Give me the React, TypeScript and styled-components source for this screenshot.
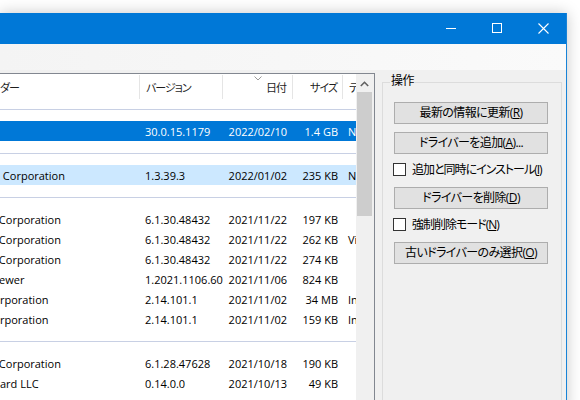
import React from "react";
import styled, { createGlobalStyle } from "styled-components";

const GlobalStyle = createGlobalStyle`
  html, body { margin: 0; padding: 0; width: 580px; height: 400px; overflow: hidden; background: #fff; }
  #root { width: 580px; height: 400px; overflow: hidden; }
  * { box-sizing: border-box; }
`;

const UI_FONT = `"Open Sans", "Noto Sans CJK JP", sans-serif`;

const Page = styled.div`
  width: 580px;
  height: 400px;
  padding-top: 13px;
  overflow: hidden;
  background: #fff;
  font-family: ${UI_FONT};
  font-feature-settings: "palt";
  color: #000;
`;

const Window = styled.div`
  width: 567px;
  height: 400px;
  background: #f0f0f0;
  border-right: 1px solid #1883d7;
  box-shadow: 0 0 14px rgba(0, 0, 0, 0.22);
  display: flex;
  flex-direction: column;
`;

const TitleBar = styled.div`
  height: 31px;
  flex-shrink: 0;
  background: #0078d7;
  display: flex;
  justify-content: flex-end;
`;

const CaptionButton = styled.div`
  width: 46px;
  height: 31px;
  display: flex;
  justify-content: center;
  align-items: flex-start;
  padding-top: 10px;
`;

const ToolStrip = styled.div`
  height: 26px;
  flex-shrink: 0;
  background: linear-gradient(to right, #f4f4f4, #fafafa);
`;

const Body = styled.div`
  flex: 1;
  display: flex;
  align-items: flex-start;
  min-height: 0;
`;

const ListView = styled.div`
  margin-top: 3px;
  width: 375px;
  height: 340px;
  background: #fff;
  border-top: 1px solid #828790;
  border-right: 1px solid #828790;
  display: flex;
  overflow: hidden;
  font-size: 11px;
`;

const ListContent = styled.div`
  width: 356px;
  flex-shrink: 0;
  display: flex;
  flex-direction: column;
  overflow: hidden;
`;

const HeaderRow = styled.div`
  height: 26px;
  flex-shrink: 0;
  display: flex;
  padding: 1px 0;
  color: #1e1e1e;
  letter-spacing: -1px;
`;

type Align = "left" | "right";

const HeaderCell = styled.div<{ $w: number; $align: Align; $pad: number }>`
  position: relative;
  flex: 0 0 ${(p) => p.$w}px;
  border-right: 1px solid #e5e5e5;
  display: flex;
  align-items: center;
  justify-content: ${(p) => (p.$align === "right" ? "flex-end" : "flex-start")};
  padding: ${(p) => (p.$align === "right" ? `0 ${p.$pad - 1}px 0 0` : `0 0 0 ${p.$pad}px`)};
  white-space: nowrap;
  overflow: hidden;
`;

const SortArrow = styled.svg`
  position: absolute;
  top: 1px;
  left: 50%;
  margin-left: -4px;
`;

const GroupHeader = styled.div<{ $first?: boolean }>`
  height: ${(p) => (p.$first ? 21 : 24)}px;
  padding-top: ${(p) => (p.$first ? 9 : 12)}px;
  flex-shrink: 0;
`;

const GroupLine = styled.div`
  height: 1px;
  background: #c8d0e4;
`;

type RowState = "selected" | "hot" | undefined;

const Row = styled.div<{ $state?: RowState }>`
  height: 20px;
  flex-shrink: 0;
  display: flex;
  align-items: center;
  background: ${(p) =>
    p.$state === "selected" ? "#0078d7" : p.$state === "hot" ? "#cce8ff" : "transparent"};
  color: ${(p) => (p.$state === "selected" ? "#fff" : "#000")};
`;

const Cell = styled.div<{ $w: number; $align: Align; $pad: number }>`
  flex: 0 0 ${(p) => p.$w}px;
  display: flex;
  justify-content: ${(p) => (p.$align === "right" ? "flex-end" : "flex-start")};
  padding: ${(p) => (p.$align === "right" ? `0 ${p.$pad}px 0 0` : `0 0 0 ${p.$pad}px`)};
  white-space: nowrap;
  overflow: hidden;
`;

const Lead = styled.span<{ $end: number }>`
  flex: 0 0 ${(p) => 80 + p.$end}px;
  margin-left: -80px;
  display: flex;
  justify-content: flex-end;
  overflow: hidden;
  white-space: nowrap;
`;

const Tail = styled.span`
  white-space: pre;
`;

const ScrollBar = styled.div`
  width: 18px;
  flex-shrink: 0;
  background: #f0f0f0;
  display: flex;
  flex-direction: column;
`;

const ScrollArrow = styled.div`
  height: 18px;
  display: flex;
  justify-content: center;
  padding: 7px 1px 0 0;
`;

const ScrollThumb = styled.div`
  height: 124px;
  margin: 0 2px 0 1px;
  background: #cdcdcd;
`;

const SidePanel = styled.div`
  margin-left: 7px;
  margin-top: 12px;
`;

const GroupBox = styled.div`
  position: relative;
  width: 180px;
  height: 330px;
  border: 1px solid #dcdcdc;
  padding: 19px 0 0 11px;
  display: flex;
  flex-direction: column;
  gap: 8px;
  font-size: 12px;
  letter-spacing: -0.6px;
`;

const GroupLabel = styled.span`
  position: absolute;
  top: -10px;
  left: 7px;
  padding: 0 1px;
  background: #f0f0f0;
  line-height: 16px;
`;

const ActionButton = styled.div`
  width: 154px;
  height: 22px;
  background: #e1e1e1;
  border: 1px solid #adadad;
  display: flex;
  align-items: center;
  justify-content: center;
  white-space: nowrap;
  line-height: 16px;
`;

const CheckRow = styled.div`
  height: 13px;
  margin: 1px 0 3px -1px;
  display: flex;
  align-items: center;
  gap: 6px;
  white-space: nowrap;
`;

const CheckBox = styled.span`
  width: 13px;
  height: 13px;
  flex-shrink: 0;
  background: #fff;
  border: 1px solid #333;
`;

const CheckLabel = styled.span`
  line-height: 16px;
  letter-spacing: -1px;
`;

const Key = styled.span`
  text-decoration: underline;
  text-underline-offset: 1px;
`;

type Col = { w: number; align: Align; pad: number };
const COLS: Col[] = [
  { w: 140, align: "left", pad: 0 },
  { w: 83, align: "left", pad: 5 },
  { w: 70, align: "right", pad: 6 },
  { w: 50, align: "right", pad: 5 },
  { w: 220, align: "left", pad: 5 },
];

type Item = {
  lead: string;
  end: number;
  tail: string;
  version: string;
  date: string;
  size: string;
  device: string;
  state?: RowState;
};

const GROUPS: Item[][] = [
  [
    {
      lead: "NVIDIA",
      end: -3,
      tail: "",
      version: "30.0.15.1179",
      date: "2022/02/10",
      size: "1.4 GB",
      device: "NVIDIA GeForce RTX 3060",
      state: "selected",
    },
  ],
  [
    {
      lead: "NVIDIA",
      end: 0,
      tail: " Corporation",
      version: "1.3.39.3",
      date: "2022/01/02",
      size: "235 KB",
      device: "NVIDIA USB Type-C Port Policy Controller",
      state: "hot",
    },
  ],
  [
    { lead: "Oracle", end: -4, tail: " Corporation", version: "6.1.30.48432", date: "2021/11/22", size: "197 KB", device: "" },
    {
      lead: "Oracle",
      end: -4,
      tail: " Corporation",
      version: "6.1.30.48432",
      date: "2021/11/22",
      size: "262 KB",
      device: "VirtualBox NDIS6 Bridged Networking Driver",
    },
    { lead: "Oracle", end: -4, tail: " Corporation", version: "6.1.30.48432", date: "2021/11/22", size: "274 KB", device: "" },
    { lead: "Print Vi", end: -1, tail: "ewer", version: "1.2021.1106.60", date: "2021/11/06", size: "824 KB", device: "" },
    {
      lead: "Intel Co",
      end: 0,
      tail: "rporation",
      version: "2.14.101.1",
      date: "2021/11/02",
      size: "34 MB",
      device: "Intel(R) Wireless Bluetooth(R)",
    },
    {
      lead: "Intel Co",
      end: 0,
      tail: "rporation",
      version: "2.14.101.1",
      date: "2021/11/02",
      size: "159 KB",
      device: "Intel(R) Wireless Bluetooth(R)",
    },
  ],
  [
    { lead: "Oracle", end: -4, tail: " Corporation", version: "6.1.28.47628", date: "2021/10/18", size: "190 KB", device: "" },
    { lead: "Blizz", end: 0, tail: "ard LLC", version: "0.14.0.0", date: "2021/10/13", size: "49 KB", device: "" },
  ],
];

const Minimize = () => (
  <svg width="10" height="10" viewBox="0 0 10 10">
    <rect x="0" y="5" width="10" height="1" fill="#fff" />
  </svg>
);
const Maximize = () => (
  <svg width="10" height="10" viewBox="0 0 10 10">
    <rect x="0.5" y="0.5" width="9" height="9" fill="none" stroke="#fff" strokeWidth="1" />
  </svg>
);
const Close = () => (
  <svg width="11" height="11" viewBox="0 0 11 11">
    <path d="M0.5 0.5 L10.5 10.5 M10.5 0.5 L0.5 10.5" stroke="#fff" strokeWidth="1.1" fill="none" />
  </svg>
);

const DataRow: React.FC<{ item: Item }> = ({ item }) => (
  <Row $state={item.state}>
    <Cell $w={COLS[0].w} $align={COLS[0].align} $pad={COLS[0].pad}>
      <Lead $end={item.end}>{item.lead}</Lead>
      <Tail>{item.tail}</Tail>
    </Cell>
    <Cell $w={COLS[1].w} $align={COLS[1].align} $pad={COLS[1].pad}>{item.version}</Cell>
    <Cell $w={COLS[2].w} $align={COLS[2].align} $pad={COLS[2].pad}>{item.date}</Cell>
    <Cell $w={COLS[3].w} $align={COLS[3].align} $pad={COLS[3].pad}>{item.size}</Cell>
    <Cell $w={COLS[4].w} $align={COLS[4].align} $pad={COLS[4].pad}>{item.device}</Cell>
  </Row>
);

export default function App() {
  return (
    <>
      <GlobalStyle />
      <Page>
        <Window>
          <TitleBar>
            <CaptionButton>
              <Minimize />
            </CaptionButton>
            <CaptionButton>
              <Maximize />
            </CaptionButton>
            <CaptionButton>
              <Close />
            </CaptionButton>
          </TitleBar>
          <ToolStrip />
          <Body>
            <ListView>
              <ListContent>
                <HeaderRow>
                  <HeaderCell $w={COLS[0].w} $align="left" $pad={0}>
                    <Lead $end={0}>プロバイ</Lead>
                    <Tail>ダー</Tail>
                  </HeaderCell>
                  <HeaderCell $w={COLS[1].w} $align="left" $pad={6}>バージョン</HeaderCell>
                  <HeaderCell $w={COLS[2].w} $align="right" $pad={7}>
                    <SortArrow width="8" height="5" viewBox="0 0 8 5">
                      <polyline points="0.5,0.5 4,4 7.5,0.5" fill="none" stroke="#9a9a9a" strokeWidth="1" />
                    </SortArrow>
                    日付
                  </HeaderCell>
                  <HeaderCell $w={COLS[3].w} $align="right" $pad={6}>サイズ</HeaderCell>
                  <HeaderCell $w={COLS[4].w} $align="left" $pad={6}>デバイス名</HeaderCell>
                </HeaderRow>
                {GROUPS.map((rows, gi) => (
                  <React.Fragment key={gi}>
                    <GroupHeader $first={gi === 0}>
                      <GroupLine />
                    </GroupHeader>
                    {rows.map((item, ri) => (
                      <DataRow key={ri} item={item} />
                    ))}
                  </React.Fragment>
                ))}
              </ListContent>
              <ScrollBar>
                <ScrollArrow>
                  <svg width="9" height="6" viewBox="0 0 9 6">
                    <polyline points="0.8,5 4.5,1.3 8.2,5" fill="none" stroke="#606060" strokeWidth="1.6" />
                  </svg>
                </ScrollArrow>
                <ScrollThumb />
              </ScrollBar>
            </ListView>
            <SidePanel>
              <GroupBox>
                <GroupLabel>操作</GroupLabel>
                <ActionButton>
                  最新の情報に更新(<Key>R</Key>)
                </ActionButton>
                <ActionButton>
                  ドライバーを追加(<Key>A</Key>)...
                </ActionButton>
                <CheckRow>
                  <CheckBox />
                  <CheckLabel>
                    追加と同時にインストール(<Key>I</Key>)
                  </CheckLabel>
                </CheckRow>
                <ActionButton>
                  ドライバーを削除(<Key>D</Key>)
                </ActionButton>
                <CheckRow>
                  <CheckBox />
                  <CheckLabel>
                    強制削除モード(<Key>N</Key>)
                  </CheckLabel>
                </CheckRow>
                <ActionButton>
                  古いドライバーのみ選択(<Key>O</Key>)
                </ActionButton>
              </GroupBox>
            </SidePanel>
          </Body>
        </Window>
      </Page>
    </>
  );
}
